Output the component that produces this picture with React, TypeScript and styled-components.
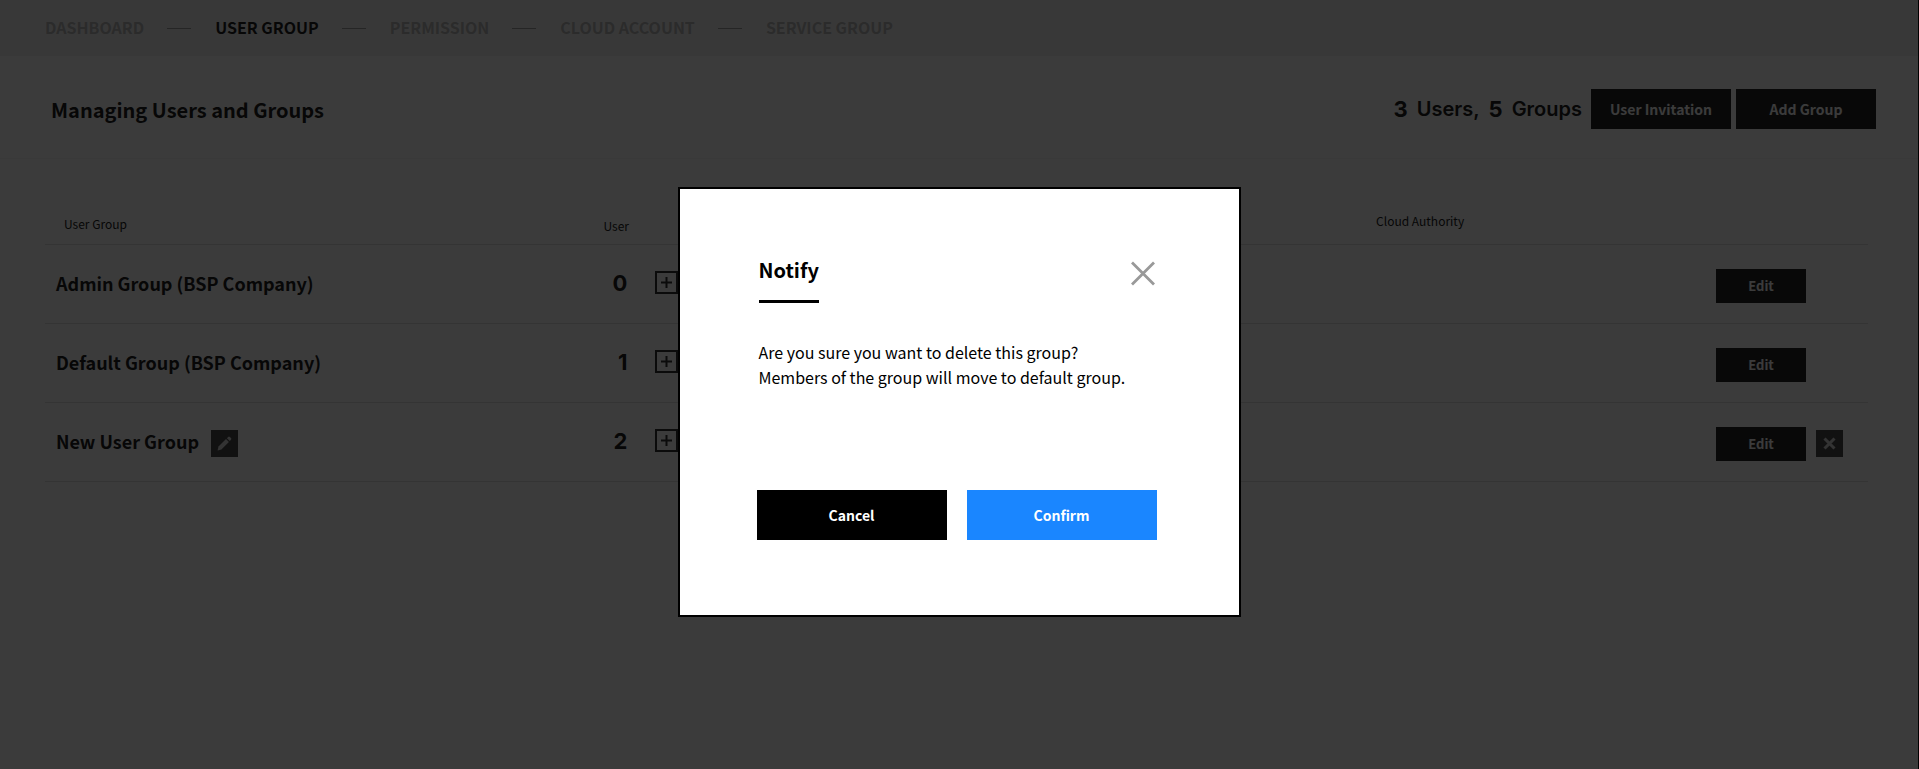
import React from 'react';
import styled, { createGlobalStyle } from 'styled-components';

const sans = `'Noto Sans CJK KR', 'Noto Sans', sans-serif`;
const display = `Inter, 'Noto Sans', sans-serif`;

const GlobalStyle = createGlobalStyle`
  * { box-sizing: border-box; }
  body { margin: 0; background: #fff; color: #222; font-family: ${sans}; }
  button { border: 0; padding: 0; font-family: inherit; cursor: pointer; }
`;

const Page = styled.div`
  min-height: 100vh;
`;

const Nav = styled.nav`
  height: 56px;
  padding-left: 45px;
  display: flex;
  align-items: center;
  background: #f3f3f3;
`;

const NavLink = styled.a<{ $active?: boolean }>`
  padding-bottom: 2px;
  font-size: 16px;
  line-height: 24px;
  font-weight: 700;
  text-decoration: none;
  color: ${(p) => (p.$active ? '#222' : '#bababa')};
`;

const NavDash = styled.span`
  width: 24px;
  height: 1px;
  margin: 0 24px 0 23px;
  background: #a0a0a0;
`;

const TitleBar = styled.header`
  height: 103px;
  padding: 33px 43px 0 51px;
  display: flex;
  align-items: flex-start;
  justify-content: space-between;
  border-bottom: 1px solid #f6f6f6;
`;

const Title = styled.h1`
  margin: 0;
  font-size: 20px;
  line-height: 42px;
  font-weight: 700;
`;

const Actions = styled.div`
  display: flex;
  align-items: center;
  gap: 5px;
`;

const Summary = styled.p`
  margin: 0 4px 0 0;
  display: flex;
  align-items: center;
  gap: 9px;
  font-family: ${display};
  font-size: 20px;
  line-height: 40px;
  font-weight: 600;
`;

const Count = styled.strong`
  font-size: 22px;
  font-weight: 700;
`;

const DarkButton = styled.button<{ $small?: boolean }>`
  width: ${(p) => (p.$small ? 90 : 140)}px;
  height: ${(p) => (p.$small ? 34 : 40)}px;
  background: #232323;
  color: #fff;
  font-size: ${(p) => (p.$small ? 13 : 14)}px;
  font-weight: 700;
`;

const Main = styled.main`
  padding: 31px 51px 0 45px;
`;

const Table = styled.table`
  width: 100%;
  table-layout: fixed;
  border-collapse: collapse;
`;

const HeadCell = styled.th<{ $indent: number; $drop: number }>`
  height: 54px;
  padding: ${(p) => p.$drop}px 0 0 ${(p) => p.$indent}px;
  border-bottom: 1px solid #dedede;
  font-size: 12px;
  line-height: 20px;
  font-weight: 400;
  text-align: left;
  vertical-align: top;
`;

const Cell = styled.td`
  height: 79px;
  padding: 0;
  border-bottom: 1px solid #dedede;
`;

const NameBox = styled.div`
  display: flex;
  align-items: center;
  gap: 12px;
  padding: 3px 0 0 11px;
`;

const GroupName = styled.span`
  padding-bottom: 5px;
  font-size: 18px;
  line-height: 28px;
  font-weight: 700;
`;

const MemberBox = styled.div`
  display: flex;
  align-items: center;
  gap: 28px;
  padding-bottom: 2px;
`;

const MemberCount = styled.span`
  width: 72px;
  text-align: right;
  font-family: ${display};
  font-size: 22px;
  line-height: 28px;
  font-weight: 700;
`;

const AddButton = styled.button`
  width: 23px;
  height: 23px;
  display: grid;
  place-items: center;
  border: 2px solid #333;
  background: transparent;
  color: #333;
`;

const SquareButton = styled.button`
  width: 27px;
  height: 27px;
  display: grid;
  place-items: center;
  background: #4c4c4c;
  color: #ddd;
`;

const RowActions = styled.div`
  display: flex;
  align-items: center;
  gap: 10px;
  padding-top: 4px;
`;

const Backdrop = styled.div`
  position: fixed;
  inset: 0;
  padding-top: 35px;
  display: flex;
  align-items: center;
  justify-content: center;
  background: rgba(0, 0, 0, 0.77);
  border-right: 1px solid #000;
`;

const Dialog = styled.section`
  width: 563px;
  padding: 67px 82px 75px 77px;
  border: 2px solid #000;
  background: #fff;
  color: #000;
`;

const DialogHead = styled.div`
  display: flex;
  justify-content: space-between;
  align-items: flex-start;
  padding: 0 2px;
`;

const DialogTitle = styled.h2`
  margin: 0;
  height: 47px;
  border-bottom: 3px solid #000;
  font-size: 20px;
  line-height: 28px;
  font-weight: 700;
`;

const CloseButton = styled.button`
  width: 25px;
  height: 25px;
  margin-top: 5px;
  background: transparent;
  color: #999;
`;

const Message = styled.p`
  margin: 37px 0 100px 2px;
  font-size: 16px;
  line-height: 25px;
`;

const DialogButtons = styled.div`
  display: grid;
  grid-template-columns: 1fr 1fr;
  gap: 20px;
`;

const DialogButton = styled.button<{ $primary?: boolean }>`
  height: 50px;
  background: ${(p) => (p.$primary ? '#1a86ff' : '#000')};
  color: #fff;
  font-size: 14px;
  font-weight: 700;
`;

const PlusIcon = () => (
  <svg width="13" height="13" viewBox="0 0 13 13" stroke="currentColor" strokeWidth="2">
    <path d="M6.5 1v11M1 6.5h11" />
  </svg>
);

const PencilIcon = () => (
  <svg width="17" height="17" viewBox="0 0 17 17" fill="currentColor">
    <path d="M1.6 15.6l.9-4 7.5-7.5 2.9 2.9-7.5 7.5z" />
    <path d="M10.9 3.2l1.3-1.3q.8-.6 1.6 0l1.2 1.2q.7.8 0 1.6L13.8 6z" />
  </svg>
);

const CrossIcon = () => (
  <svg width="13" height="13" viewBox="0 0 13 13" stroke="currentColor" strokeWidth="3">
    <path d="M1.5 1.5l10 10M11.5 1.5l-10 10" />
  </svg>
);

const CloseIcon = () => (
  <svg width="25" height="25" viewBox="0 0 25 25" stroke="currentColor" strokeWidth="2.8">
    <path d="M2 1.5l22 22M24 1.5l-22 22" />
  </svg>
);

const sections = ['DASHBOARD', 'USER GROUP', 'PERMISSION', 'CLOUD ACCOUNT', 'SERVICE GROUP'];

const groups = [
  { name: 'Admin Group (BSP Company)', users: 0, custom: false },
  { name: 'Default Group (BSP Company)', users: 1, custom: false },
  { name: 'New User Group', users: 2, custom: true },
];

export default function App() {
  return (
    <>
      <GlobalStyle />
      <Page>
        <Nav>
          {sections.map((name, i) => (
            <React.Fragment key={name}>
              {i > 0 && <NavDash />}
              <NavLink href="#" $active={name === 'USER GROUP'}>{name}</NavLink>
            </React.Fragment>
          ))}
        </Nav>
        <TitleBar>
          <Title>Managing Users and Groups</Title>
          <Actions>
            <Summary>
              <Count>3</Count> Users, <Count>5</Count> Groups
            </Summary>
            <DarkButton>User Invitation</DarkButton>
            <DarkButton>Add Group</DarkButton>
          </Actions>
        </TitleBar>
        <Main>
          <Table>
            <colgroup>
              <col width="28%" />
              <col width="42%" />
              <col />
              <col width="152" />
            </colgroup>
            <thead>
              <tr>
                <HeadCell $indent={19} $drop={24}>User Group</HeadCell>
                <HeadCell $indent={48} $drop={26}>User</HeadCell>
                <HeadCell $indent={55} $drop={21}>Cloud Authority</HeadCell>
                <HeadCell $indent={0} $drop={24} aria-label="Actions" />
              </tr>
            </thead>
            <tbody>
              {groups.map((g) => (
                <tr key={g.name}>
                  <Cell>
                    <NameBox>
                      <GroupName>{g.name}</GroupName>
                      {g.custom && <SquareButton aria-label="Rename group"><PencilIcon /></SquareButton>}
                    </NameBox>
                  </Cell>
                  <Cell>
                    <MemberBox>
                      <MemberCount>{g.users}</MemberCount>
                      <AddButton aria-label="Add user"><PlusIcon /></AddButton>
                    </MemberBox>
                  </Cell>
                  <Cell />
                  <Cell>
                    <RowActions>
                      <DarkButton $small>Edit</DarkButton>
                      {g.custom && <SquareButton aria-label="Delete group"><CrossIcon /></SquareButton>}
                    </RowActions>
                  </Cell>
                </tr>
              ))}
            </tbody>
          </Table>
        </Main>
      </Page>
      <Backdrop>
        <Dialog role="dialog" aria-modal="true" aria-labelledby="notify-title">
          <DialogHead>
            <DialogTitle id="notify-title">Notify</DialogTitle>
            <CloseButton aria-label="Close"><CloseIcon /></CloseButton>
          </DialogHead>
          <Message>
            Are you sure you want to delete this group?
            <br />
            Members of the group will move to default group.
          </Message>
          <DialogButtons>
            <DialogButton>Cancel</DialogButton>
            <DialogButton $primary>Confirm</DialogButton>
          </DialogButtons>
        </Dialog>
      </Backdrop>
    </>
  );
}
